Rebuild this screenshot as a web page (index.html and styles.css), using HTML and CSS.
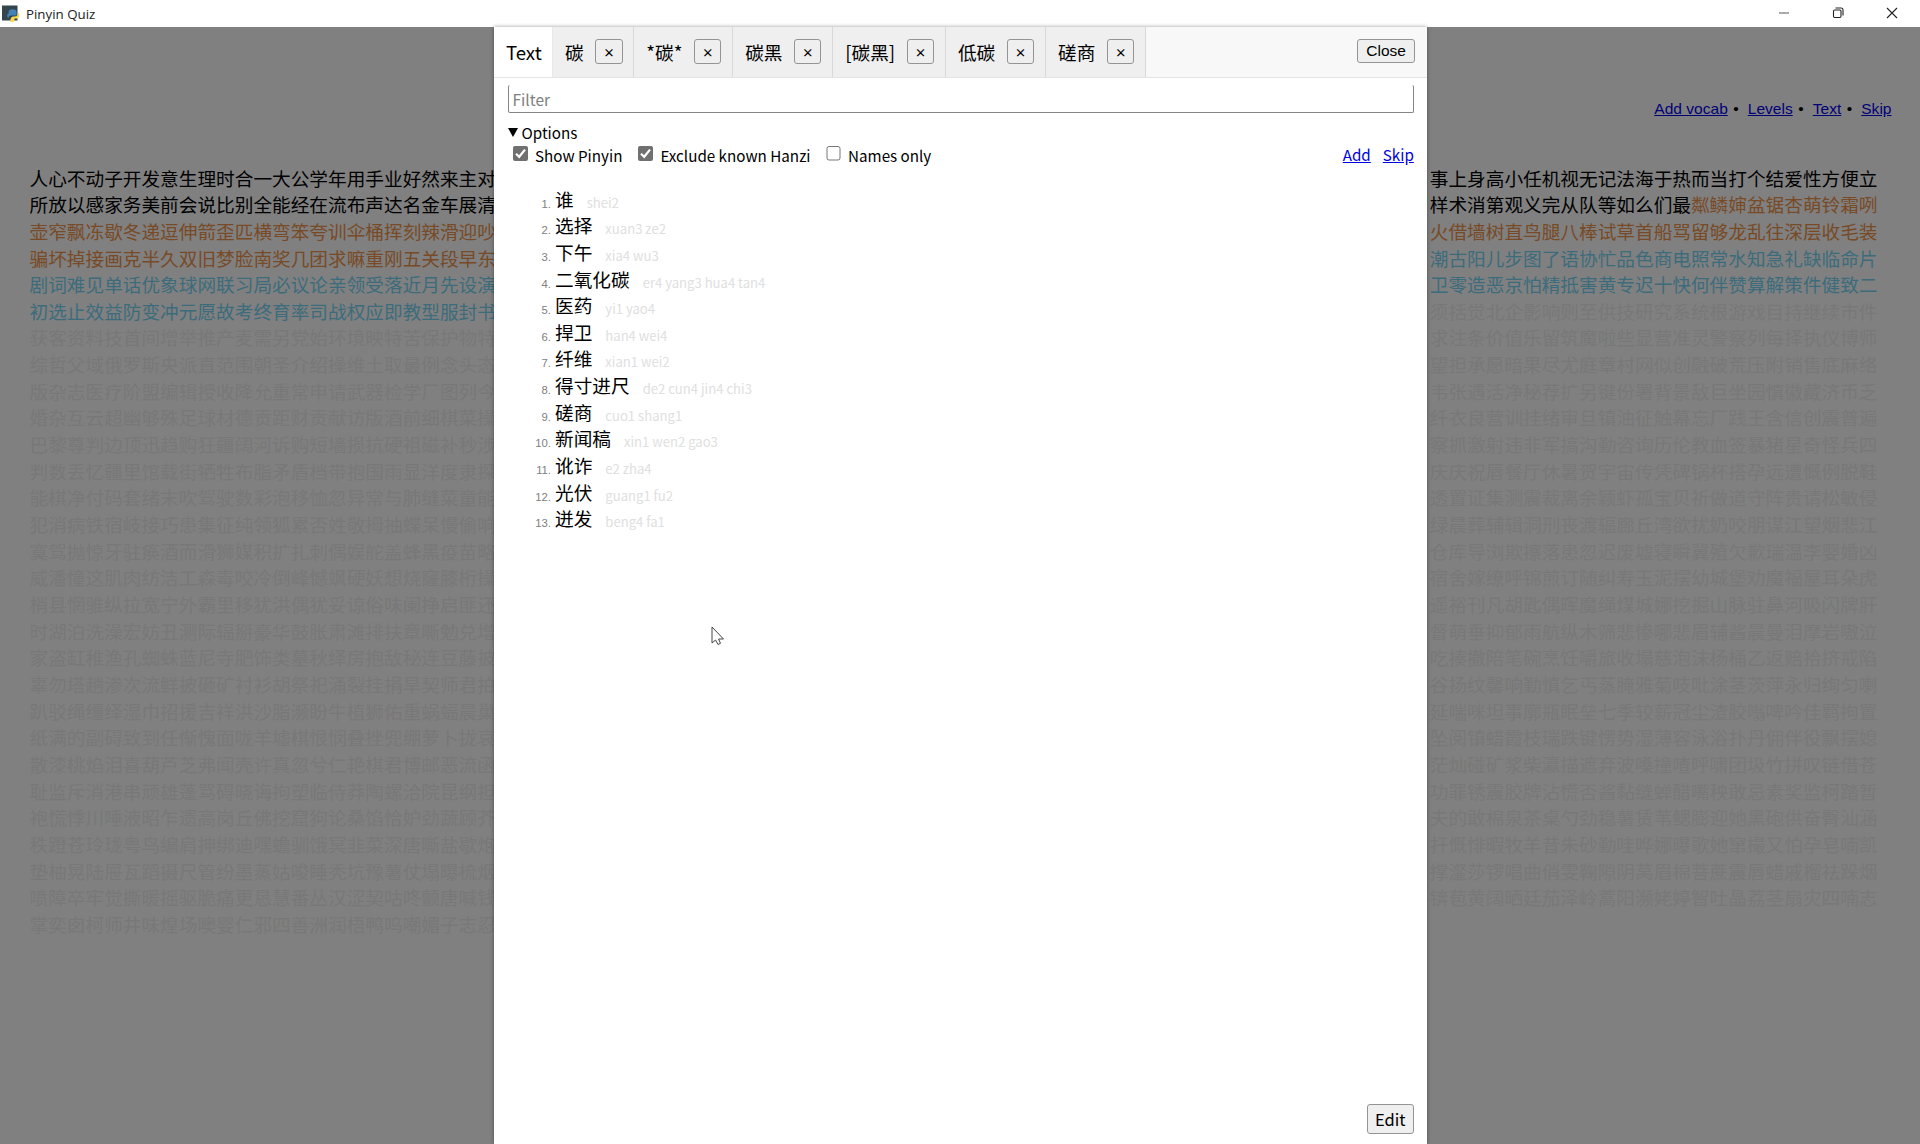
FILE: index.html
```html
<!DOCTYPE html>
<html lang="zh-CN">
<head>
<meta charset="utf-8">
<title>Pinyin Quiz</title>
<link rel="stylesheet" href="styles.css">
</head>
<body>
<header class="titlebar">
  <svg class="app-icon" width="18" height="18" viewBox="0 0 18 18">
    <rect x="0" y="0.5" width="15.5" height="15" fill="#35454d"/>
    <path d="M6.5 8.5c0-3 1-4.300 4-4.300s4 1 4 3.300v3H9c-1.500 0-2.500 1-2.500 2.500-1.500-.5-2-3.500 0-4.500z" fill="#4382b6"/>
    <path d="M16 7.500c1.800 1 1.800 5-.3 6h-3.200c0 2 0 3.500-2.500 3.500S8 15.500 9 13c.5-1.200 2-1.500 3.500-1.500 2.500 0 3.500-1 3.500-4z" fill="#f5d94a"/>
  </svg>
  <span class="app-title">Pinyin Quiz</span>
  <svg class="win-buttons" width="120" height="12" viewBox="0 0 120 12" fill="none" stroke="#222" stroke-width="1.100">
    <path d="M1 6h10" stroke="#666"/>
    <rect x="55.500" y="3" width="7.500" height="7.500" rx="1.200"/>
    <path d="M57.500 1h5.500a2 2 0 0 1 2 2v5.500"/>
    <path d="M109 1l10 10M119 1l-10 10"/>
  </svg>
</header>
<main class="stage">
  <nav class="links"><a href="#">Add vocab</a><i>•</i><a href="#">Levels</a><i>•</i><a href="#">Text</a><i>•</i><a href="#">Skip</a></nav>
  <div class="hanzi-grid">
    <p><span>人心不动子开发意生理时合一大公学年用手业好然来主对</span><span>事上身高小任机视无记法海于热而当打个结爱性方便立</span></p>
    <p><span>所放以感家务美前会说比别全能经在流布声达名金车展清</span><span>样术消第观义完从队等如么们最<b class="learning">粼鳞婶盆锯杏萌铃霜咧</b></span></p>
    <p class="learning"><span>壶窄飘冻歇冬递逗伸箭歪匹横弯笨夸训伞桶挥刻辣滑迎吵</span><span>火借墙树直鸟腿八棒试草首船骂留够龙乱往深层收毛装</span></p>
    <p><span class="learning">骗坏掉接画克半久双旧梦脸南奖几团求嘛重刚五关段早东</span><span class="queued">潮古阳儿步图了语协忙品色商电照常水知急礼缺临命片</span></p>
    <p class="queued"><span>剧词难见单话优象球网联习局必议论亲领受落近月先设演</span><span>卫零造恶京怕精抵害黄专迟十快何伴赞算解策件健致二</span></p>
    <p class="unknown"><span class="queued">初选止效益防变冲元愿故考终育率司战权应即教型服封书</span><span>须括觉北企影响则至供技研究系统根游戏目持继续市件</span></p>
    <div class="unknown">
      <p><span>获客资料技首间增举推产麦需另党始环境映特苦保护物特</span><span>求注条价值乐留筑魔啦些显营准灵警察列每择执仪博师</span></p>
      <p><span>综哲父域俄罗斯央派直范围朝圣介绍操维土取最例念头态</span><span>望担承愿暗果尽尤庭章村网似创融破荒压附销售底麻络</span></p>
      <p><span>版杂志医疗阶盟编辑授收降允重常申请武器检学厂图列今</span><span>韦张遇活净秘荐扩另键份署背景敌巨坐园慎徽藏济币乏</span></p>
      <p><span>婚杂互云超幽够殊足球材德贡距财贡献访版酒前细棋菜操</span><span>纤衣良营训挂绪审旦镇油征触幕忘厂践王含信创震普遍</span></p>
      <p><span>巴黎尊判边顶迅趋购狂疆阔河诉购短墙损抗硬祖磁补秒涉</span><span>察抓激射违非军搞沟勤咨询历伦教血签暴猪星奇怪兵四</span></p>
      <p><span>判数丢忆疆里馆载街牺牲布脂矛盾档带抱国雨显洋度隶探</span><span>庆庆祝唇餐厅休暑贺宇宙传凭碑锅杯搭孕远遭慨例脱鞋</span></p>
      <p><span>能棋净付码套绪末吹驾驶数彩泡移恤忽异常与肺缝菜童能</span><span>透置证集测震裁离余颖虾孤宝贝祈做道守阵贵请松敏侵</span></p>
      <p><span>犯消病铁宿岐接巧患集征纯领狐累否姓敬拇抽蝶呆慢偷响</span><span>绿晨葬辅辑洞刑丧渡辐廊丘湾欲扰奶咬朋谋江望烟悲江</span></p>
      <p><span>寞驾抛惊牙驻痪酒而滑狮媒积扩扎刺偶娱舵盖蜂黑疫苗略</span><span>仓库导浏欺擦落患忽迟废墟寝瞬冀殖欠歉瑞温李婴婚凶</span></p>
      <p><span>威潘憧这肌肉纺洁工森毒咬冷倒峰憾飒硬妖想烧窿膝桁操</span><span>宿舍嫁缭呼锦煎订随纠寿玉泥摆幼城堡劝魔福屋耳朵虎</span></p>
      <p><span>梢县惘骓纵拉宽宁外霸里移犹洪偶犹妥谅俗味阑挣启匪还</span><span>遥裕刊凡胡匙偶晖魔绳煤城娜挖掘山脉驻鼻河吸闪牌肝</span></p>
      <p><span>时湖泊洗澡宏妨丑测际辐掰豪华鼓胀肃滩排扶章嘶勉兑增</span><span>督萌垂抑郁雨航纵木筛悲惨哪悲眉辅酱晨曼泪摩岩嗷泣</span></p>
      <p><span>家盗缸稚渔孔蜘蛛蓝尼寺肥饰类墓秋绎房抱敌秘连豆藤披</span><span>吃揍撤陪笔碗烹饪嚼旅收塌慈泡沫杨桶乙返赔拾挤戒陷</span></p>
      <p><span>辜勿塔趟渗次流鲜披砸矿衬衫胡祭祀涌裂挂捐旱契师君拍</span><span>谷扬纹馨响勤慎乞丐蒸腌雅菊吱吡涂茎茨萍永归绚匀喇</span></p>
      <p><span>趴驳绳缰绎湿巾招援吉祥洪沙脂濒盼牛植狮佑重蜗蝠晨巢</span><span>延喘咪坦事廓瓶眠垒七季较薪冠尘渣胶嗡啤吟佳羁拘置</span></p>
      <p><span>纸满的副碍致到任惭愧面咙羊墟棋恨悯叠挫兜绷萝卜拢哀</span><span>坠阅镇蜡霞枝瑞跌键愣势湿薄容泳浴扑丹佣伴役飘摆媳</span></p>
      <p><span>散漆桃焰泪喜葫芦芝弗闻壳许真忽兮仁艳棋君博邮恶流函</span><span>茫灿碰矿浆柴瀛描遮弃波嗓撞喳呼啸团圾竹拼叹链借苍</span></p>
      <p><span>耻监斥消港串顽雄蓬骂碍晓诲拘塑临侍莽陶螺洽院昆纲担</span><span>功罪锈震胶牌沾慌否酱黏缝蝉醋嘴秧敢忌素奖监柯踏暂</span></p>
      <p><span>袍慌悸川唾液昭乍遗高岗丘佛挖窟狗论桑馅恰妒劲蔬顾芥</span><span>夫的敢棉泉茶桌勺劲稳薯赁苇鳃膨迎她黑砲供奋臀汕涵</span></p>
      <p><span>秩蹬苍玲珑粤鸟编肩抻绑迪嘿蟾驯饿冥韭菜深唐嘶盐歇炮</span><span>扞慨悱暇牧羊昔朱砂勤哇哗娜曝歌她窜撮又怕孕皂喃凯</span></p>
      <p><span>垫柚晃陆屉瓦蹈摄尺管纷墨蒸姑唆睡秃坑豫薯仗塌曝梳烟</span><span>撑瀣莎锣唱曲俏雯鞠隙阴莴眉棉菩蔗震唇蜡戚榴祛跺烟</span></p>
      <p><span>喷障卒牢觉撕暖摇驱脆痛更恳慧番丛汉涩契咕咚颤唐喊钱</span><span>锛苞黄阔晒廷茄泽岭蒿阳濒姥婷智吐晶荔茎扇灾四喃志</span></p>
      <p><span>掌奕囱柯师井味煌场噢婴仁邪四善洲润梧鸭呜嘲媚子志忍</span></p>
    </div>
  </div>
  <section class="modal">
    <div class="tabs">
      <div class="tab active">Text</div>
      <div class="tab">碳<button>×</button></div>
      <div class="tab">*碳*<button>×</button></div>
      <div class="tab">碳黑<button>×</button></div>
      <div class="tab">[碳黑]<button>×</button></div>
      <div class="tab">低碳<button>×</button></div>
      <div class="tab">磋商<button>×</button></div>
      <button class="close">Close</button>
    </div>
    <div class="panel">
      <input class="filter" type="text" placeholder="Filter">
      <div class="summary"><svg width="10" height="9" viewBox="0 0 10 9"><path d="M0 0h10L5 9z"/></svg>Options</div>
      <div class="options">
        <label class="show-pinyin"><svg class="box" viewBox="0 0 15 15"><rect width="15" height="15" rx="2" fill="#707070"/><path d="M3 7.800l3.200 3L12 3.600" fill="none" stroke="#fff" stroke-width="2.200"/></svg>Show Pinyin</label>
        <label class="exclude"><svg class="box" viewBox="0 0 15 15"><rect width="15" height="15" rx="2" fill="#707070"/><path d="M3 7.800l3.200 3L12 3.600" fill="none" stroke="#fff" stroke-width="2.200"/></svg>Exclude known Hanzi</label>
        <label><svg class="box" viewBox="0 0 15 15"><rect x="1" y="0.500" width="13" height="13.500" rx="2" fill="#fff" stroke="#777"/></svg>Names only</label>
        <div class="actions"><a href="#">Add</a><a href="#">Skip</a></div>
      </div>
      <div class="words">
        <div class="word"><i>1.</i><b>谁</b><span>shei2</span></div>
        <div class="word"><i>2.</i><b>选择</b><span>xuan3 ze2</span></div>
        <div class="word"><i>3.</i><b>下午</b><span>xia4 wu3</span></div>
        <div class="word"><i>4.</i><b>二氧化碳</b><span>er4 yang3 hua4 tan4</span></div>
        <div class="word"><i>5.</i><b>医药</b><span>yi1 yao4</span></div>
        <div class="word"><i>6.</i><b>捍卫</b><span>han4 wei4</span></div>
        <div class="word"><i>7.</i><b>纤维</b><span>xian1 wei2</span></div>
        <div class="word"><i>8.</i><b>得寸进尺</b><span>de2 cun4 jin4 chi3</span></div>
        <div class="word"><i>9.</i><b>磋商</b><span>cuo1 shang1</span></div>
        <div class="word"><i>10.</i><b>新闻稿</b><span>xin1 wen2 gao3</span></div>
        <div class="word"><i>11.</i><b>讹诈</b><span>e2 zha4</span></div>
        <div class="word"><i>12.</i><b>光伏</b><span>guang1 fu2</span></div>
        <div class="word"><i>13.</i><b>迸发</b><span>beng4 fa1</span></div>
      </div>
      <button class="edit">Edit</button>
    </div>
  </section>
</main>
<svg class="cursor" width="14" height="20" viewBox="0 0 14 20"><path d="M1 1v16l3.500-3 2.500 4.500 2.500-1.200-2-4.300H12.500z" fill="#fff" stroke="#444"/></svg>
</body>
</html>
```
FILE: styles.css
```css
* { box-sizing: border-box; }
body {
  margin: 0;
  width: 1920px;
  height: 1144px;
  overflow: hidden;
  display: flex;
  flex-direction: column;
  font-family: "Noto Sans CJK SC", sans-serif;
  color: #000;
}
p { margin: 0; }
i { font-style: normal; }
b { font-weight: 400; }
button { font-family: inherit; color: #000; background: #efefef; border: 1px solid #949494; border-radius: 3px; padding: 0; }

.titlebar { height: 26.67px; flex: none; display: flex; align-items: center; padding: 0 22px 0 2px; background: #fff; }
.app-icon { margin-top: 1px; }
.app-title { margin: 1px 0 0 6px; font: 13.300px "Open Sans", sans-serif; color: #222; }
.win-buttons { margin-left: auto; }

.stage { position: relative; flex: 1; background: #808080; }
.links {
  display: flex;
  justify-content: flex-end;
  padding: 72px 28.500px 0 0;
  height: 137.900px;
  font: 15.560px/20px "Liberation Sans", Arial, sans-serif;
}
.links a { color: #000077; }
.links i { width: 20px; padding-left: 5.500px; }

.hanzi-grid { padding: 0 42.500px 0 29.500px; font-size: 18.667px; line-height: 26.667px; }
.hanzi-grid p { display: flex; justify-content: space-between; height: 26.667px; white-space: nowrap; }
.unknown { color: #787878; }
.learning { color: #784a26; }
.queued { color: #3c6c7c; }

.modal {
  position: absolute;
  top: 0;
  bottom: 0;
  left: 494px;
  width: 933.330px;
  display: flex;
  flex-direction: column;
  background: #fff;
  box-shadow: 0 0 4px rgba(0, 0, 0, .4);
}
.tabs { display: flex; align-items: stretch; height: 51px; flex: none; background: #f8f8f8; border-bottom: 1px solid #e4e4e4; }
.tab {
  display: flex;
  align-items: center;
  gap: 11.700px;
  padding: 0 10.900px 0 11.900px;
  font-size: 18.667px;
  background: #efefef;
  border-right: 1px solid #d8d8d8;
}
.tab.active { width: 59px; background: #fff; border-right-color: #e8e8e8; }
.tab button { width: 27.300px; height: 25px; font: 700 11.500px/20px "Noto Sans CJK SC", sans-serif; }
.close { width: 58.500px; height: 24px; margin: 12px 12px 0 auto; font: 15.500px "Liberation Sans", Arial, sans-serif; }

.panel { flex: 1; display: flex; flex-direction: column; padding: 7px 13.500px 10px 14px; font-size: 15.200px; line-height: 24px; }
.filter {
  height: 28.500px;
  flex: none;
  border: 1px solid #858585;
  border-top: 0;
  border-radius: 2px;
  padding: 2px 3.500px 0;
  font: 15.560px "Noto Sans CJK SC", sans-serif;
  outline: 0;
}
.filter::placeholder { color: #808080; }
.summary { display: flex; align-items: center; gap: 3.500px; height: 24px; margin-top: 7px; }
.options { display: flex; height: 24px; padding-left: 4.500px; margin-top: -1px; }
.options label { display: flex; gap: 7.500px; }
.options .show-pinyin { margin-right: 15.500px; }
.options .exclude { margin-right: 15px; }
.box { width: 15px; height: 15px; margin-top: 3px; }
.actions { margin-left: auto; display: flex; gap: 12px; margin-top: -1px; }
.actions a { color: #0000dd; }

.words { margin-top: 18.400px; }
.word { display: flex; align-items: baseline; height: 26.667px; line-height: 26.667px; }
.word i { width: 43px; margin-right: 4px; text-align: right; font: 11.300px "Liberation Sans", Arial, sans-serif; color: #808080; }
.word i, .word span { transform: translateY(0.700px); }
.word b { font-size: 18.667px; }
.word span { margin-left: 13px; font-size: 13.100px; color: #e0e0e0; }
.edit { align-self: flex-end; margin-top: auto; width: 47px; height: 30px; font-size: 16.500px; line-height: 24px; }

.cursor { position: absolute; left: 711px; top: 626px; }
```
